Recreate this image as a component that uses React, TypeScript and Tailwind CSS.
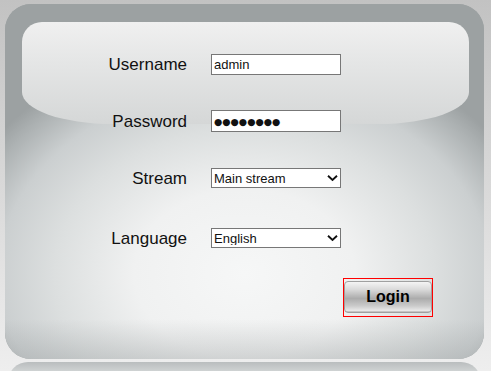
import React from "react";

const Chevron = () => (
  <svg
    width="11"
    height="7"
    viewBox="0 0 11 7"
    className="pointer-events-none absolute right-[3px] top-1/2 -translate-y-1/2"
  >
    <path d="M1 1.2 L5.5 5.4 L10 1.2" fill="none" stroke="#111" strokeWidth="1.9" />
  </svg>
);

function Row({ label, children, className }: { label: string; children: React.ReactNode; className: string }) {
  return (
    <div className={`flex items-center ${className}`}>
      <div className="w-[182px] text-right text-[17px] leading-none text-[#111]">{label}</div>
      <div className="ml-[24px]">{children}</div>
    </div>
  );
}

export default function App() {
  const field =
    "block w-[130px] border border-[#777] bg-white px-[2px] text-[13px] leading-none text-[#111] outline-none";
  return (
    <div
      className="relative h-[371px] w-[491px] overflow-hidden bg-[linear-gradient(#c2c2c2_0%,#d0d0d0_30%,#e6e6e6_80%,#eeeeee_100%)]"
      style={{ fontFamily: '"Liberation Sans", Arial, sans-serif' }}
    >
      <div className="pl-[5px] pt-[4px]">
        <div className="relative h-[355px] w-[479px] overflow-hidden rounded-[26px] bg-[#9ca1a2]">
          {/* soft body */}
          <div className="absolute inset-0 bg-[radial-gradient(ellipse_64%_66%_at_50%_76%,#f6f7f7_0%,#f0f1f1_36%,#dcdfdf_62%,#cbcfd0_80%,#abb0b1_94%,#9ca1a2_100%)]" />
          {/* top gloss highlight */}
          <div className="absolute left-[17px] right-[15px] top-[18px] h-[102px] rounded-t-[20px] rounded-b-[90px_32px] bg-[linear-gradient(#f0f0f0_0%,#e6e7e7_35%,#d5d7d7_100%)]" />
          {/* bottom darker shade */}
          <div className="absolute inset-x-0 bottom-0 h-[40px] bg-[linear-gradient(transparent,rgba(150,155,156,0.35))]" />

          <div className="relative">
            <Row label="Username" className="mt-[50px] h-[21px]">
              <input className={`${field} h-[21px]`} value="admin" readOnly />
            </Row>
            <Row label="Password" className="mt-[35px] h-[22px]">
              <input
                className={`${field} h-[22px] !text-[9.5px]`}
                style={{ fontFamily: '"DejaVu Sans", sans-serif' }}
                value="●●●●●●●●"
                readOnly
              />
            </Row>
            <Row label="Stream" className="mt-[36px] h-[20px]">
              <div className="relative">
                <select className={`${field} h-[20px] appearance-none`} defaultValue="main">
                  <option value="main">Main stream</option>
                  <option value="sub">Sub stream</option>
                </select>
                <Chevron />
              </div>
            </Row>
            <Row label="Language" className="mt-[40px] h-[20px]">
              <div className="relative">
                <select className={`${field} h-[20px] appearance-none`} defaultValue="en">
                  <option value="en">English</option>
                </select>
                <Chevron />
              </div>
            </Row>
            <div className="ml-[338px] mt-[30px] h-[39px] w-[90px] border border-[#ff0000] pt-[2px]">
              <button className="block h-[32px] w-[88px] rounded-[4px] border border-[#a0a0a0] bg-[linear-gradient(#f4f4f4_0%,#dadada_25%,#acacac_55%,#cbcbcb_80%,#e8e8e8_95%,#b4b4b4_100%)] text-[16px] font-bold text-black">
                Login
              </button>
            </div>
          </div>
        </div>
        {/* reflection */}
        <div className="ml-[3px] mt-[3px] h-[20px] w-[473px] rounded-t-[24px] bg-[linear-gradient(#b9bdbe_0%,#d4d7d7_55%,#eaeaea_100%)]" />
      </div>
    </div>
  );
}
